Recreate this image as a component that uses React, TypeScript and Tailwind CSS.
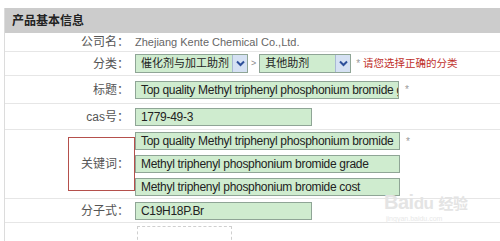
import React from 'react';

const font = { fontFamily: '"Liberation Sans", "Noto Sans CJK SC", sans-serif' };

function Select({ text, w }: { text: string; w: string }) {
  return (
    <div className={`flex h-[19px] ${w} border border-[#8fa596] bg-[#cfeccf]`}>
      <div className="flex-1 overflow-hidden whitespace-nowrap pl-[5px] text-[11px] leading-[17px] text-[#222]">{text}</div>
      <div className="flex w-[15px] items-center justify-center border-l border-[#a9b9d4] bg-[#d5e1f3]">
        <svg width="9" height="7" viewBox="0 0 9 7">
          <path d="M1 1.5 L4.5 5 L8 1.5" fill="none" stroke="#2d4f9a" strokeWidth="2" />
        </svg>
      </div>
    </div>
  );
}

function Input({ text, w }: { text: string; w: string }) {
  return (
    <div className={`h-[18px] ${w} overflow-hidden whitespace-nowrap border border-[#8fa596] bg-[#cfeccf] pl-[5px] text-[12px] leading-[16px] tracking-[-0.3px] text-[#222]`}>
      {text}
    </div>
  );
}

function Row({ label, h, children }: { label: React.ReactNode; h: string; children: React.ReactNode }) {
  return (
    <div className={`flex ${h} border-b border-[#e6e6e6]`}>
      <div className="flex w-[130px] shrink-0 items-center justify-end pr-[6px] text-[12px] text-[#555]">{label}</div>
      <div className="flex flex-1 items-center gap-[6px]">{children}</div>
    </div>
  );
}

const Star = () => <span className="text-[10px] text-[#999]">*</span>;

export default function App() {
  return (
    <div className="relative h-[241px] w-[500px] overflow-hidden bg-white" style={font}>
      <div className="ml-[4px] mt-[8px] border-l border-[#dcdcdc]">
        <div className="flex h-[25px] items-center bg-[#cccccc] pl-[7px] text-[12px] font-bold text-[#222]">
          产品基本信息
        </div>
        <Row label="公司名：" h="h-[19px]">
          <span className="text-[11px] text-[#666]">Zhejiang Kente Chemical Co.,Ltd.</span>
        </Row>
        <Row label="分类：" h="h-[24px]">
          <div className="flex items-center gap-[3px]">
            <Select text="催化剂与加工助剂" w="w-[113px]" />
            <span className="text-[9px] text-[#888]">&gt;</span>
            <Select text="其他助剂" w="w-[92px]" />
            <span className="ml-[2px] text-[10.5px] text-[#c0302a]">
              <span className="text-[10px] text-[#999]">*</span> 请您选择正确的分类
            </span>
          </div>
        </Row>
        <Row label="标题：" h="h-[28px]">
          <Input text="Top quality Methyl triphenyl phosphonium bromide grade" w="w-[264px]" />
          <Star />
        </Row>
        <Row label="cas号：" h="h-[26px]">
          <Input text="1779-49-3" w="w-[177px]" />
        </Row>
        <div className="flex h-[69px] border-b border-[#e6e6e6]">
          <div className="flex w-[130px] shrink-0 items-center justify-end text-[12px] text-[#555]">
            <div className="flex h-[54px] w-[67px] items-center justify-end border border-[#b5504c] pr-[5px]">
              关键词：
            </div>
          </div>
          <div className="flex flex-col justify-center gap-[5px]">
            <div className="flex items-center gap-[6px]">
              <Input text="Top quality Methyl triphenyl phosphonium bromide" w="w-[265px]" />
              <Star />
            </div>
            <Input text="Methyl triphenyl phosphonium bromide grade" w="w-[265px]" />
            <Input text="Methyl triphenyl phosphonium bromide cost" w="w-[265px]" />
          </div>
        </div>
        <Row label="分子式：" h="h-[24px]">
          <Input text="C19H18P.Br" w="w-[177px]" />
        </Row>
        <div className="flex h-[30px]">
          <div className="w-[130px]" />
          <div className="ml-[2px] mt-[3px] h-[30px] w-[95px] border border-dashed border-[#cfcfcf]" />
        </div>
      </div>
      <div className="absolute left-[384px] top-[187px] whitespace-nowrap text-[20px] font-bold tracking-tight text-[#e4e4e4]">
        Bai<span className="text-[17px]">du</span> <span className="text-[15px]">经验</span>
      </div>
      <div className="absolute left-[386px] top-[214px] whitespace-nowrap text-[7px] text-[#e8e8e8]">jingyan.baidu.com</div>
    </div>
  );
}
